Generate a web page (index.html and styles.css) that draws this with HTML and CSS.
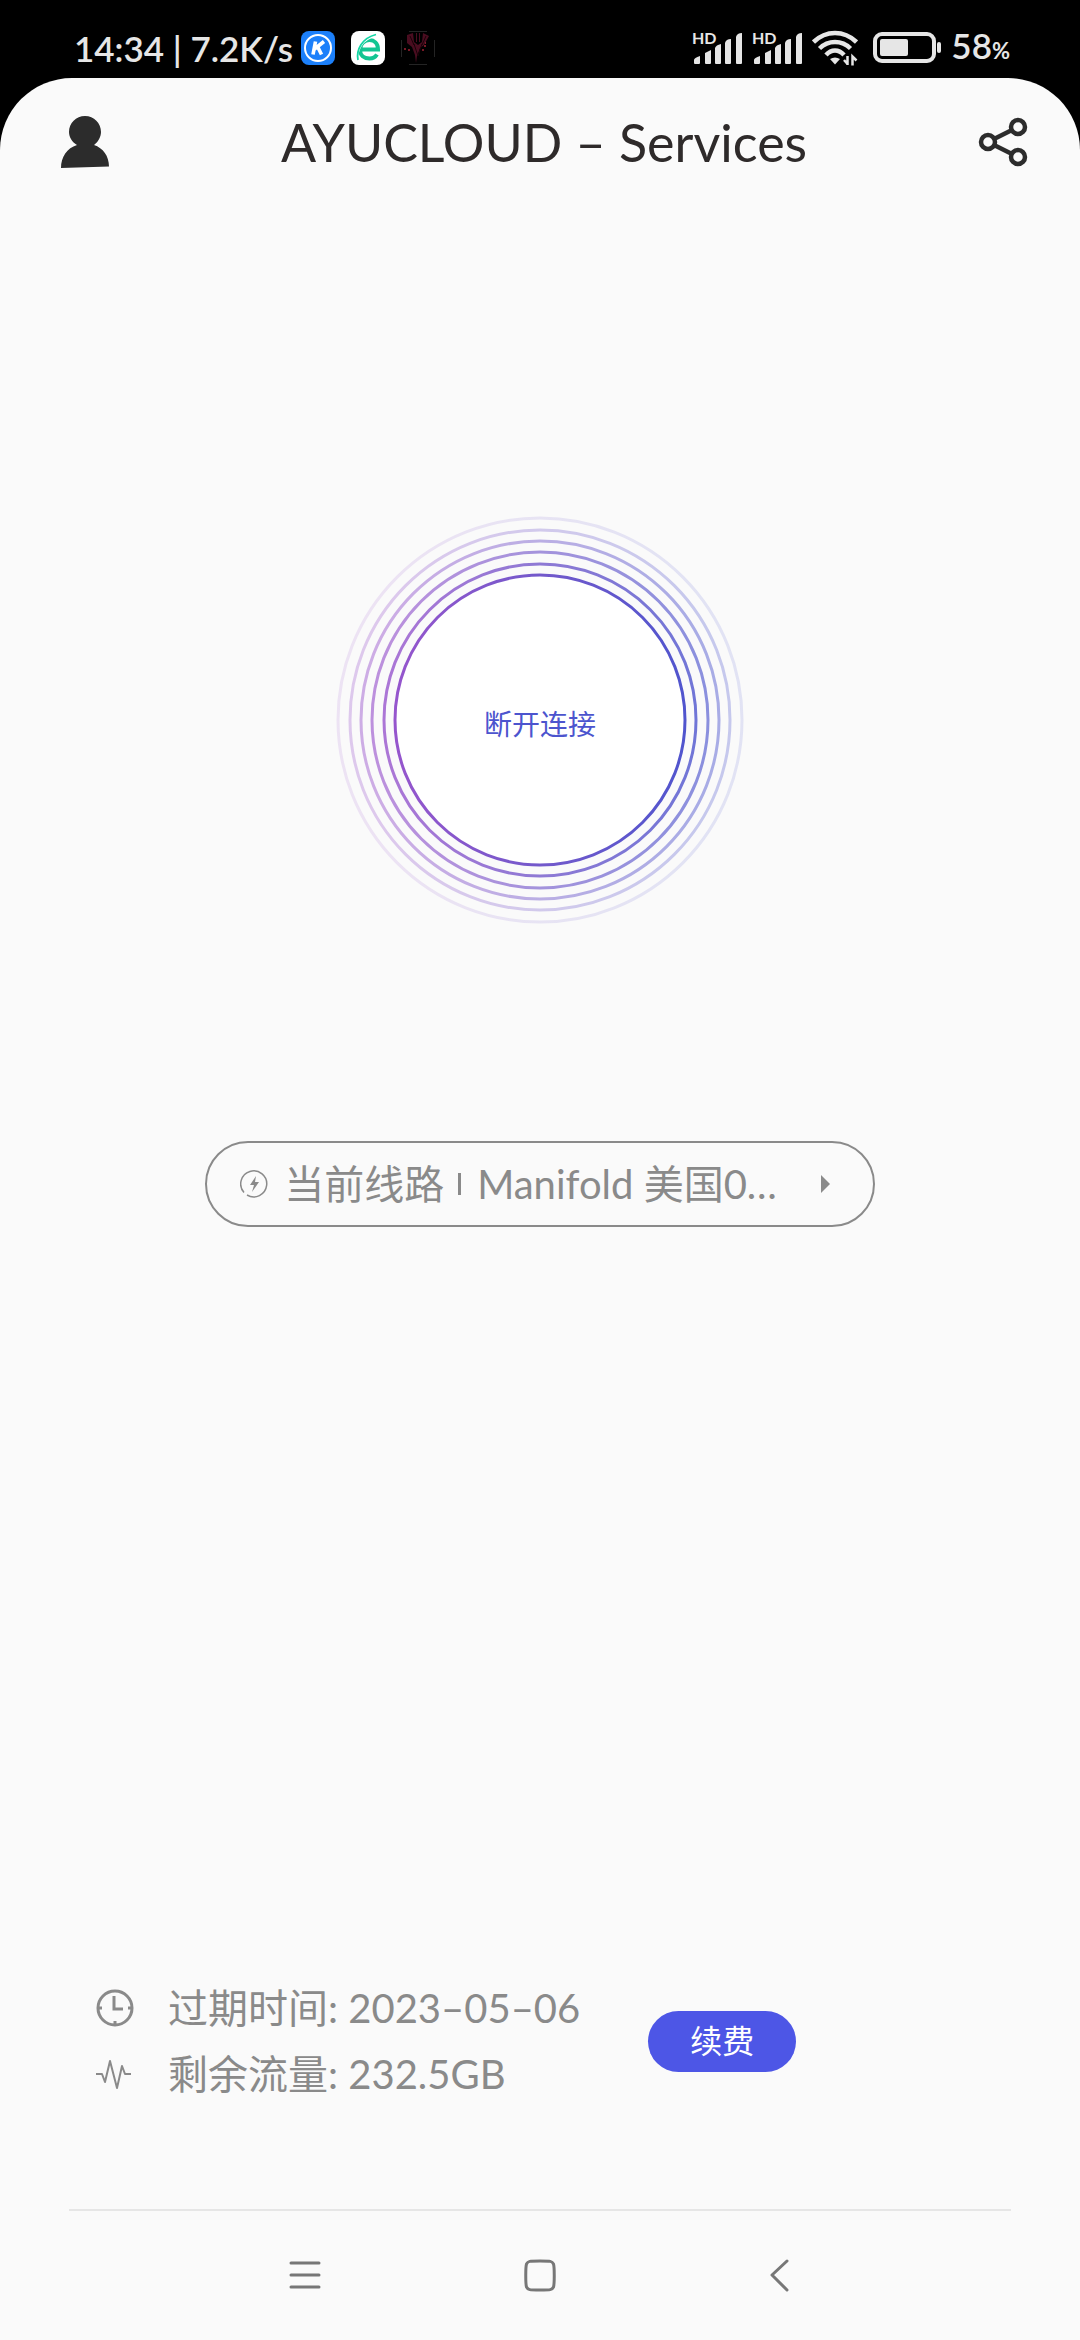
FILE: index.html
```html
<!DOCTYPE html>
<html lang="zh-CN">
<head>
  <meta charset="UTF-8">
  <meta name="viewport" content="width=device-width, initial-scale=1.0">
  <title>AYUCLOUD – Services</title>
  <link rel="stylesheet" href="styles.css">
</head>
<body>

  <!-- Status bar -->
  <div class="status-bar">
    <div class="status-left">
      <span class="status-text">14:34 | 7.2K/s</span>
      <div class="app-icons">
        <svg width="34" height="34" viewBox="0 0 34 34">
          <rect width="34" height="34" rx="8" fill="#1c80fa"/>
          <circle cx="17" cy="17" r="13" fill="none" stroke="#fff" stroke-width="2"/>
          <path d="M14.5 10.5L12 23.5M23 10.5l-9.500 7.500M16.500 15.500l4 8" fill="none" stroke="#fff" stroke-width="3.600"/>
        </svg>
        <svg width="34" height="34" viewBox="0 0 34 34">
          <rect width="34" height="34" rx="8" fill="#fff"/>
          <path d="M10 18.500h17C27 12 23 9 18.500 9S9 12.500 9 18.500 13 27.500 18.500 27.500c3.500 0 6-1.500 7.500-4" fill="none" stroke="#12c592" stroke-width="4"/>
          <path d="M6 29C4 20 10 6 25 4" fill="none" stroke="#fff" stroke-width="4"/>
          <path d="M7 29C5 19 11 7 25 3.500" fill="none" stroke="#14d6a5" stroke-width="1.800"/>
        </svg>
        <svg width="34" height="34" viewBox="0 0 34 34">
          <path d="M8 .5h18M8 33.500h18M.5 9v17M33.500 9v17" stroke="#242424"/>
          <path d="M6 4l6-2 1 9 4 3 4-3 1-9 6 3-5 9-4 3-3 8-1 7-1-8-3-8-5-4zM15 2h1v9h-1zM18 2h1v9h-1z" fill="#4a0d20"/>
          <path d="M13 13l4 12M21 13l-4 12M9 5l4 9M25 5l-4 9" stroke="#1a0308" fill="none"/>
          <path d="M3 18h2M7 19h2M23 15h2M21 19h2M24 12h1" stroke="#9e2233" stroke-width="1.500"/>
        </svg>
      </div>
    </div>
    <div class="status-right">
      <svg width="51" height="44" viewBox="0 -5 51 44" fill="#e6e6e6">
        <text class="hd" x="0" y="13">HD</text>
        <path d="M2 33v-4q0-2 6-4v7q0 1-1 1H3q-1 0-1-1zM13 32V22q2-1 6-3v13q0 1-1 1h-4q-1 0-1-1zM23 32V17q1-3 6-4v19q0 1-1 1h-4q-1 0-1-1zM33 32V12q1-4 6-4v24q0 1-1 1h-4q-1 0-1-1zM44 32V6q1-4 6-4v30q0 1-1 1h-4q-1 0-1-1z"/>
      </svg>
      <svg width="51" height="44" viewBox="0 -5 51 44" fill="#e6e6e6">
        <text class="hd" x="0" y="13">HD</text>
        <path d="M2 33v-4q0-2 6-4v7q0 1-1 1H3q-1 0-1-1zM13 32V22q2-1 6-3v13q0 1-1 1h-4q-1 0-1-1zM23 32V17q1-3 6-4v19q0 1-1 1h-4q-1 0-1-1zM33 32V12q1-4 6-4v24q0 1-1 1h-4q-1 0-1-1zM44 32V6q1-4 6-4v30q0 1-1 1h-4q-1 0-1-1z"/>
      </svg>
      <svg class="wifi" width="46" height="36" viewBox="0 0 46 36" fill="none" stroke="#e6e6e6" stroke-width="4.500">
        <path d="M1.500 12Q11 3 23 3t21.500 9M7.500 18.500Q14 12 23 12t15.500 6.500M14 25Q18 20.500 23 20.500t9 4.500"/>
        <path d="M18 29q5-3 10 0l-5 5.500z" fill="#e6e6e6" stroke="none"/>
        <path d="M35.500 26v9M32 30l3.500 4M40.500 35.500v-9l4 4" stroke-width="2.500"/>
      </svg>
      <svg class="battery" width="69" height="32" viewBox="0 0 69 32">
        <rect x="2" y="2" width="59" height="27" rx="7" fill="none" stroke="#e6e6e6" stroke-width="4"/>
        <rect x="7" y="7" width="28" height="17" rx="2" fill="#e6e6e6"/>
        <rect x="64" y="10" width="4" height="11" rx="2" fill="#e6e6e6"/>
      </svg>
      <span class="status-text">58<small>%</small></span>
    </div>
  </div>

  <div class="app">
    <!-- Header -->
    <header>
      <button class="icon-btn" aria-label="Account">
        <svg width="50" height="54" viewBox="0 0 50 54" fill="#2c2c2c">
          <path d="M25 1c9 0 16 7 16 16 0 5-3 10-7 13 9 3 15 11 15 21.500L1 53C1 42 7 33 17 30c-5-3-8-8-8-13C9 8 16 1 25 1z"/>
        </svg>
      </button>
      <h1>AYUCLOUD – Services</h1>
      <button class="icon-btn" aria-label="Share">
        <svg width="50" height="50" viewBox="0 0 50 50" fill="none" stroke="#2c2c2c" stroke-width="4.500">
          <circle cx="10" cy="25" r="7"/>
          <circle cx="40" cy="10" r="7"/>
          <circle cx="40" cy="40" r="7"/>
          <path d="M16 22l18-9M16 28l18 9"/>
        </svg>
      </button>
    </header>

    <main>
      <!-- Connect button -->
      <button class="connect">
        <svg class="rings" viewBox="0 0 408 408" fill="none" stroke="url(#ring)" stroke-width="3">
          <defs>
            <linearGradient id="ring" gradientUnits="userSpaceOnUse" x1="0" y1="204" x2="408" y2="204">
              <stop offset="0.1" stop-color="#9a55cd"/>
              <stop offset="0.5" stop-color="#7359cb"/>
              <stop offset="0.9" stop-color="#4c54ce"/>
            </linearGradient>
          </defs>
          <circle cx="204" cy="204" r="202" opacity="0.14"/>
          <circle cx="204" cy="204" r="190" opacity="0.3"/>
          <circle cx="204" cy="204" r="179" opacity="0.47"/>
          <circle cx="204" cy="204" r="168" opacity="0.64"/>
          <circle cx="204" cy="204" r="156" opacity="0.8"/>
          <circle cx="204" cy="204" r="145" fill="#fff"/>
        </svg>
        <span class="connect-label">断开连接</span>
      </button>

      <!-- Current route -->
      <button class="route">
        <svg width="28" height="28" viewBox="0 0 28 28">
          <path d="M4 22.500A13 13 0 1 1 7 25" fill="none" stroke="#8a8a8a" stroke-width="1.500"/>
          <path d="M16 6l-6 9h4l-2 7 7-10h-4z" fill="#8a8a8a"/>
        </svg>
        <span class="route-text">当前线路</span>
        <span class="route-line"></span>
        <span class="route-text">Manifold 美国0…</span>
        <svg class="route-arrow" width="10" height="18" viewBox="0 0 10 18" fill="#8a8a8a">
          <path d="M0 0l9 9-9 9z"/>
        </svg>
      </button>

      <!-- Account info -->
      <section class="info">
        <ul>
          <li>
            <svg width="38" height="38" viewBox="0 0 38 38" fill="none" stroke="#8a8a8a" stroke-width="3">
              <circle cx="19" cy="19" r="17"/>
              <path d="M18 7v13h9M2 19h4M32 19h4M19 32v4"/>
            </svg>
            过期时间: 2023–05–06
          </li>
          <li>
            <svg width="38" height="38" viewBox="0 0 38 38" fill="none" stroke="#8a8a8a" stroke-width="2" stroke-linejoin="round">
              <path d="M0 19h6l3 8 5-21 7 27 5-22 3 8h6"/>
            </svg>
            剩余流量: 232.5GB
          </li>
        </ul>
        <button class="renew">续费</button>
      </section>
    </main>

    <!-- System navigation -->
    <nav>
      <button class="icon-btn" aria-label="Menu">
        <svg width="34" height="34" viewBox="0 0 34 34" stroke="#777" stroke-width="3" stroke-linecap="round">
          <path d="M3 4h28M3 16h28M3 28h28"/>
        </svg>
      </button>
      <button class="icon-btn" aria-label="Home">
        <svg width="34" height="34" viewBox="0 0 34 34" fill="none" stroke="#777" stroke-width="3">
          <path d="M17 2c11 0 12 0 13.500 3 1 3 1 20 0 23-1.500 3-2.500 3-13.500 3s-12 0-13.500-3c-1-3-1-20 0-23 1.500-3 2.500-3 13.500-3z"/>
        </svg>
      </button>
      <button class="icon-btn" aria-label="Back">
        <svg width="34" height="34" viewBox="0 0 34 34" fill="none" stroke="#777" stroke-width="3" stroke-linecap="round" stroke-linejoin="round">
          <path d="M29 2L14 16l15 15"/>
        </svg>
      </button>
    </nav>
  </div>

</body>
</html>
```
FILE: styles.css
```css
/* General styling */
* {
  box-sizing: border-box;
}

body {
  margin: 0;
  min-height: 100vh;
  display: flex;
  flex-direction: column;
  font-family: Lato, "Noto Sans CJK SC", sans-serif;
  background-color: #000;
  color: #8a8a8a;
}

button {
  font-family: inherit;
  color: inherit;
  padding: 0;
  border: none;
  background: none;
  cursor: pointer;
}

svg {
  display: block;
  flex-shrink: 0;
}

/* Status bar */
.status-bar {
  height: 78px;
  padding: 18px 70px 0 74px;
  display: flex;
  justify-content: space-between;
  align-items: center;
  color: #e6e6e6;
}

.status-left,
.status-right,
.app-icons {
  display: flex;
  align-items: center;
}

.status-left {
  gap: 8px;
}

.app-icons {
  gap: 16px;
}

.status-text {
  font-size: 35px;
  font-weight: 600;
  line-height: 40px;
}

.status-text small {
  font-size: 22px;
  font-weight: 700;
}

.status-right {
  gap: 9px;
}

.battery {
  margin-left: 6px;
}

.hd {
  font-size: 16px;
  font-weight: 700;
}

/* App surface */
.app {
  flex: 1;
  display: flex;
  flex-direction: column;
  background-color: #fafafa;
  border-radius: 72px 72px 0 0;
}

header {
  padding: 30px 52px 0 60px;
  display: flex;
  justify-content: space-between;
  align-items: center;
}

h1 {
  margin: 0;
  font-size: 52px;
  font-weight: 400;
  line-height: 68px;
  color: #2e2a2a;
}

main {
  flex: 1;
  display: flex;
  flex-direction: column;
  align-items: center;
  padding-top: 340px;
}

/* Connect button */
.connect {
  width: 408px;
  height: 408px;
  display: grid;
  place-items: center;
  border-radius: 50%;
}

.rings,
.connect-label {
  grid-area: 1 / 1;
}

.rings {
  width: 100%;
}

.connect-label {
  font-size: 28px;
  line-height: 36px;
  padding-top: 8px;
  color: #4c54ce;
}

/* Current route */
.route {
  width: 62%;
  height: 86px;
  margin-top: 217px;
  padding: 0 42px 0 33px;
  display: flex;
  align-items: center;
  border: 2px solid #8a8a8a;
  border-radius: 43px;
}

.route-text {
  margin-left: 16px;
  font-size: 40px;
  line-height: 48px;
  white-space: nowrap;
}

.route-line {
  width: 3px;
  height: 22px;
  margin-left: 14px;
  background-color: #8a8a8a;
}

.route-arrow {
  margin-left: auto;
}

/* Account info */
.info {
  align-self: stretch;
  margin-top: auto;
  padding: 0 96px 102px;
  display: flex;
  align-items: center;
  gap: 68px;
}

.info ul {
  margin: 0;
  padding: 0;
  list-style: none;
}

.info li {
  display: flex;
  align-items: center;
  gap: 34px;
  font-size: 40px;
  line-height: 66px;
}

.renew {
  width: 148px;
  height: 61px;
  border-radius: 31px;
  font-size: 32px;
  line-height: 40px;
  color: #fff;
  background-color: #4d56e6;
}

/* System navigation */
nav {
  height: 131px;
  margin: 0 69px;
  padding: 0 219px;
  display: flex;
  justify-content: space-between;
  align-items: center;
  border-top: 2px solid #e6e6e6;
}
```
